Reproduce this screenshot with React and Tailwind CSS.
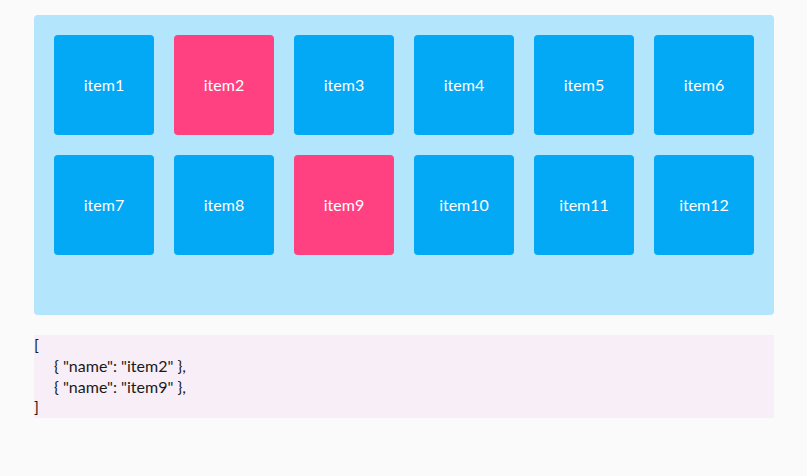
import { useState } from 'react';

const items = Array.from({ length: 12 }, (_, i) => `item${i + 1}`);

export default function App() {
  const [selected, setSelected] = useState(['item2', 'item9']);

  const toggle = (name) => {
    setSelected((prev) =>
      prev.includes(name) ? prev.filter((n) => n !== name) : [...prev, name]
    );
  };

  return (
    <div className="min-h-[476px] bg-[#fafafa] pt-[15px] px-[34px] font-['Lato','Open_Sans',sans-serif]">
      {/* Grid of items */}
      <div className="w-[740px] h-[300px] rounded bg-[#b3e5fc] p-5">
        <div className="grid grid-cols-6 gap-5">
          {items.map((name) => (
            <button
              key={name}
              onClick={() => toggle(name)}
              className={`w-[100px] h-[100px] rounded flex items-center justify-center text-white text-[16px] ${
                selected.includes(name) ? 'bg-[#ff4081]' : 'bg-[#03a9f4]'
              }`}
            >
              {name}
            </button>
          ))}
        </div>
      </div>

      {/* Selected output */}
      <div className="mt-5 w-[740px] bg-[#f8eef7] text-[#1a1a1a] text-[16px] leading-[20.75px]">
        <div>[</div>
        {selected.map((name) => (
          <div key={name} className="pl-5">{`{ "name": "${name}" },`}</div>
        ))}
        <div>]</div>
      </div>
    </div>
  );
}
